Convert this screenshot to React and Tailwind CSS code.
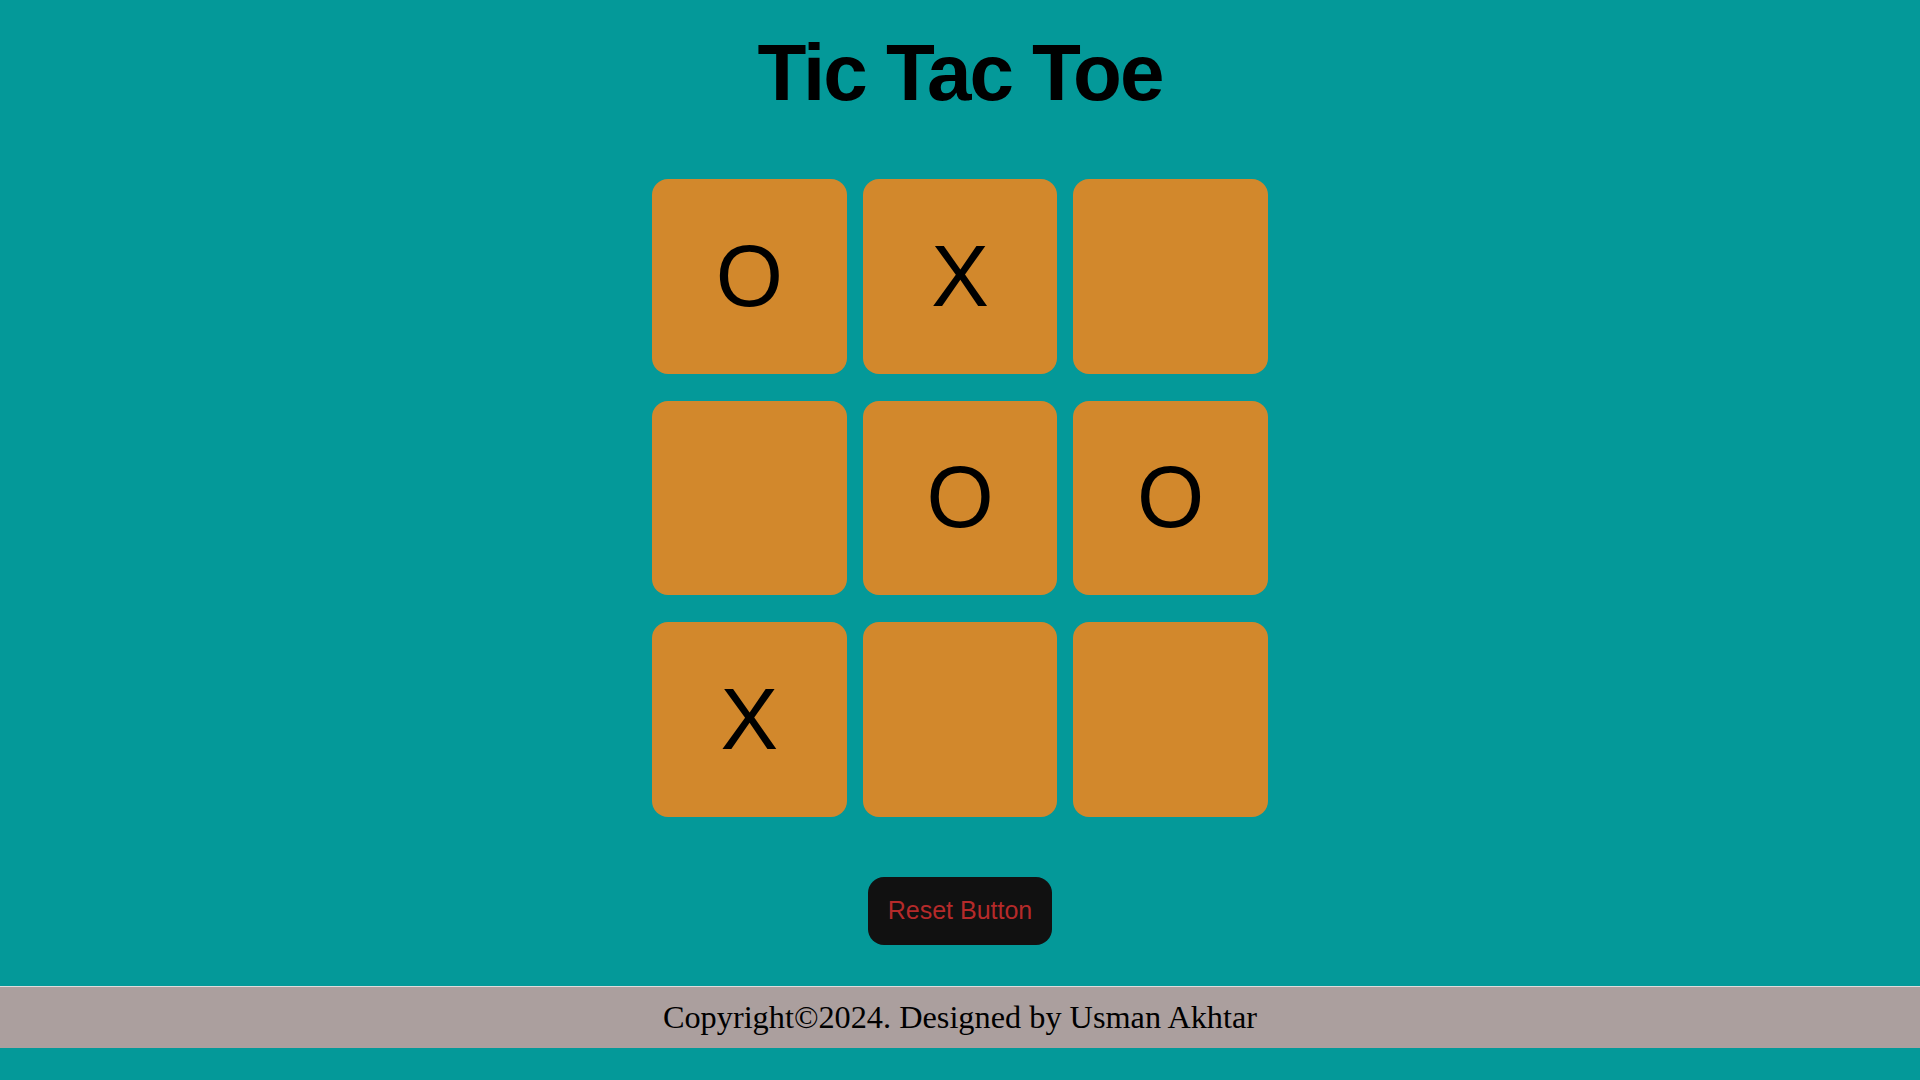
const board = ['O', 'X', '', '', 'O', 'O', 'X', '', ''];

const App = () => {
  return (
    <div className="min-h-screen bg-[#049999] flex flex-col items-center">
      <h1 className="mt-[33px] text-[80px] leading-[80px] font-bold tracking-[-2px] text-black font-['Liberation_Sans',Arial,sans-serif]">
        Tic Tac Toe
      </h1>

      <div className="mt-[61px] w-[648px] h-[648px] flex flex-wrap justify-center items-center gap-[16.2px]">
        {board.map((val, i) => (
          <button
            key={i}
            className="w-[194.4px] h-[194.4px] rounded-2xl bg-[#d2882c] flex items-center justify-center text-[86.4px] text-black font-['Liberation_Sans',Arial,sans-serif]"
          >
            {val}
          </button>
        ))}
      </div>

      <button className="mt-[55px] w-[184px] h-[68px] rounded-2xl bg-[#111111] text-[#b52a2a] text-[25px] font-['Liberation_Sans',Arial,sans-serif]">
        Reset Button
      </button>

      <footer className="mt-[41px] w-full h-[62px] border-t border-[#dddddd] bg-[#ab9f9e] flex items-center justify-center">
        <p className="text-[32.3px] text-black font-['Liberation_Serif','Times_New_Roman',serif]">
          Copyright©2024. Designed by Usman Akhtar
        </p>
      </footer>
    </div>
  );
};

export default App;
